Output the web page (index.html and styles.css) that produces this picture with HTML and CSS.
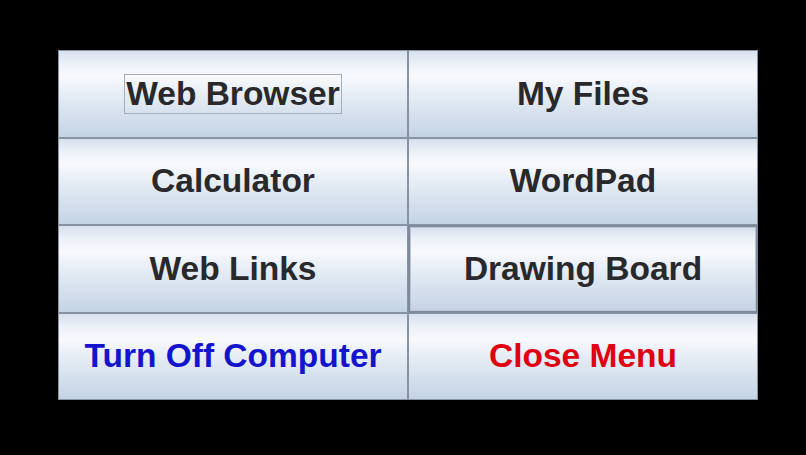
FILE: index.html
```html
<!DOCTYPE html>
<html>
<head>
<meta charset="utf-8">
<link rel="stylesheet" href="styles.css">
</head>
<body>
<div class="menu">
  <button class="btn"><span class="label focus">Web Browser</span></button>
  <button class="btn"><span class="label">My Files</span></button>
  <button class="btn"><span class="label">Calculator</span></button>
  <button class="btn"><span class="label">WordPad</span></button>
  <button class="btn"><span class="label">Web Links</span></button>
  <button class="btn hover"><span class="label">Drawing Board</span></button>
  <button class="btn"><span class="label blue">Turn Off Computer</span></button>
  <button class="btn"><span class="label red">Close Menu</span></button>
</div>
</body>
</html>
```

FILE: styles.css
```css
html, body {
  margin: 0;
  padding: 0;
  background: #000;
  width: 806px;
  height: 455px;
  overflow: hidden;
}
body {
  padding: 50px 0 0 58px;
  box-sizing: border-box;
}
.menu {
  width: 700px;
  height: 350px;
  display: grid;
  grid-template-columns: 350px 350px;
  grid-template-rows: repeat(4, 87.5px);
}
.btn {
  margin: 0;
  padding: 0;
  border: 1px solid #8793a3;
  background: linear-gradient(to bottom, #d6e0ed 0%, #edf1f8 15%, #f8f9fc 30%, #e6edf5 50%, #d5e0ed 75%, #c4d3e5 100%);
  display: flex;
  align-items: center;
  justify-content: center;
  font-family: "Liberation Sans", Arial, sans-serif;
  font-weight: bold;
  font-size: 33.5px;
  color: #29292b;
}
.btn.hover {
  border: 2px solid #7d8a9b;
  box-shadow: inset 0 0 0 1px #b9c5d4;
}
.label {
  display: inline-block;
  line-height: 38px;
  padding: 0 1px;
  border: 1px solid transparent;
}
.label.focus {
  border-color: #a3aebd;
}
.blue {
  color: #1414cc;
}
.red {
  color: #df0012;
}
```
